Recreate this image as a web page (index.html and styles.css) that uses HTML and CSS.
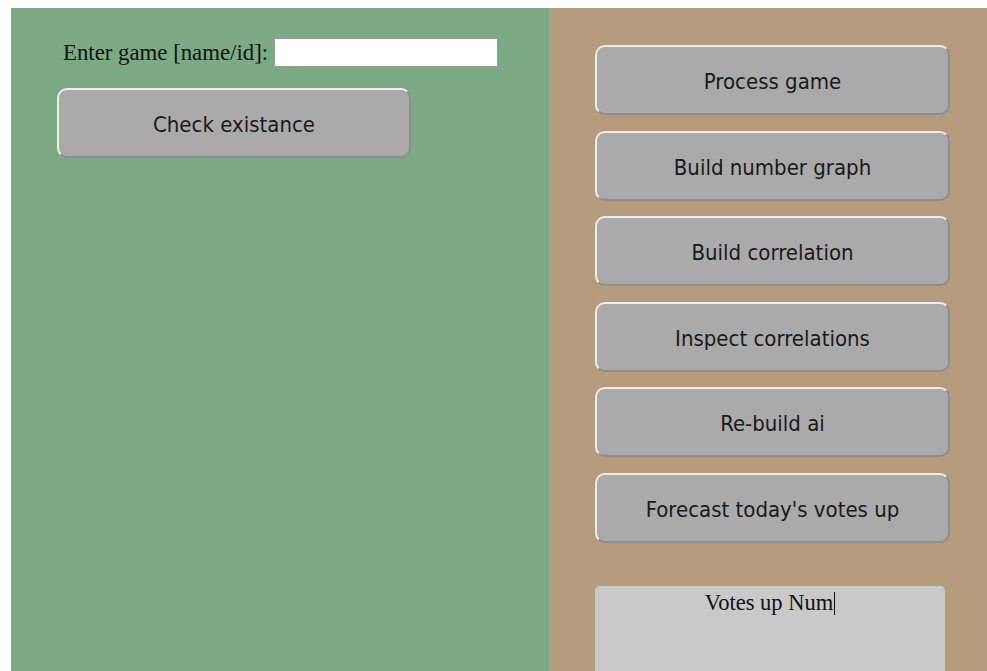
FILE: index.html
```html
<!DOCTYPE html>
<html lang="en">
<head>
<meta charset="utf-8">
<title>Game tools</title>
<link rel="stylesheet" href="styles.css">
</head>
<body>
<div class="layout">
  <section class="panel panel-lookup">
    <div class="lookup-row">
      <label class="lookup-label" for="game">Enter game [name/id]:</label>
      <input class="lookup-input" id="game" type="text">
    </div>
    <button class="action action-check" type="button">Check existance</button>
  </section>
  <section class="panel panel-actions">
    <div class="action-list">
      <button class="action" type="button">Process game</button>
      <button class="action" type="button">Build number graph</button>
      <button class="action" type="button">Build correlation</button>
      <button class="action" type="button">Inspect correlations</button>
      <button class="action" type="button">Re-build ai</button>
      <button class="action" type="button">Forecast today's votes up</button>
    </div>
    <div class="result" role="textbox">Votes up Num<span class="caret"></span></div>
  </section>
</div>
</body>
</html>
```

FILE: styles.css
```css
html, body {
  overflow: hidden;
}

body {
  margin: 8px 0 0 11px;
  font-family: "Liberation Serif", "Times New Roman", serif;
  color: #111;
}

.layout {
  display: flex;
  height: 700px;
}

.panel {
  box-sizing: border-box;
}

.panel-lookup {
  width: 538px;
  flex: none;
  background: #7baa83;
  padding: 30px 0 0 46px;
}

.panel-actions {
  flex: 1;
  background: #b59c7c;
  padding: 37px 0 0 46px;
}

.lookup-row {
  display: flex;
  align-items: center;
  gap: 6px;
  padding-left: 6px;
}

.lookup-label {
  font-size: 22.8px;
}

.lookup-input {
  box-sizing: border-box;
  width: 224px;
  height: 29px;
  margin: 0;
  border: 1px solid #9a9a9a;
  background: #fff;
}

.action {
  box-sizing: border-box;
  display: block;
  width: 355px;
  height: 70px;
  margin: 0;
  padding: 3px 0 0;
  background: #aaaaaa;
  border: 2px solid;
  border-color: #ececec #8e8e8e #8e8e8e #ececec;
  border-radius: 10px;
  font-family: "DejaVu Sans Condensed", "DejaVu Sans", sans-serif;
  font-size: 22px;
  color: #1a1a1a;
  text-align: center;
}

.action-check {
  margin-top: 21px;
  width: 354px;
}

.action-list {
  display: flex;
  flex-direction: column;
  gap: 15.6px;
}

.result {
  box-sizing: border-box;
  width: 350px;
  height: 140px;
  margin-top: 43px;
  padding-top: 4px;
  background: #c9c9c9;
  border-radius: 5px;
  font-size: 22.5px;
  text-align: center;
}

.caret {
  display: inline-block;
  width: 1px;
  height: 23px;
  margin-left: 1px;
  background: #111;
  vertical-align: -5px;
}
```
